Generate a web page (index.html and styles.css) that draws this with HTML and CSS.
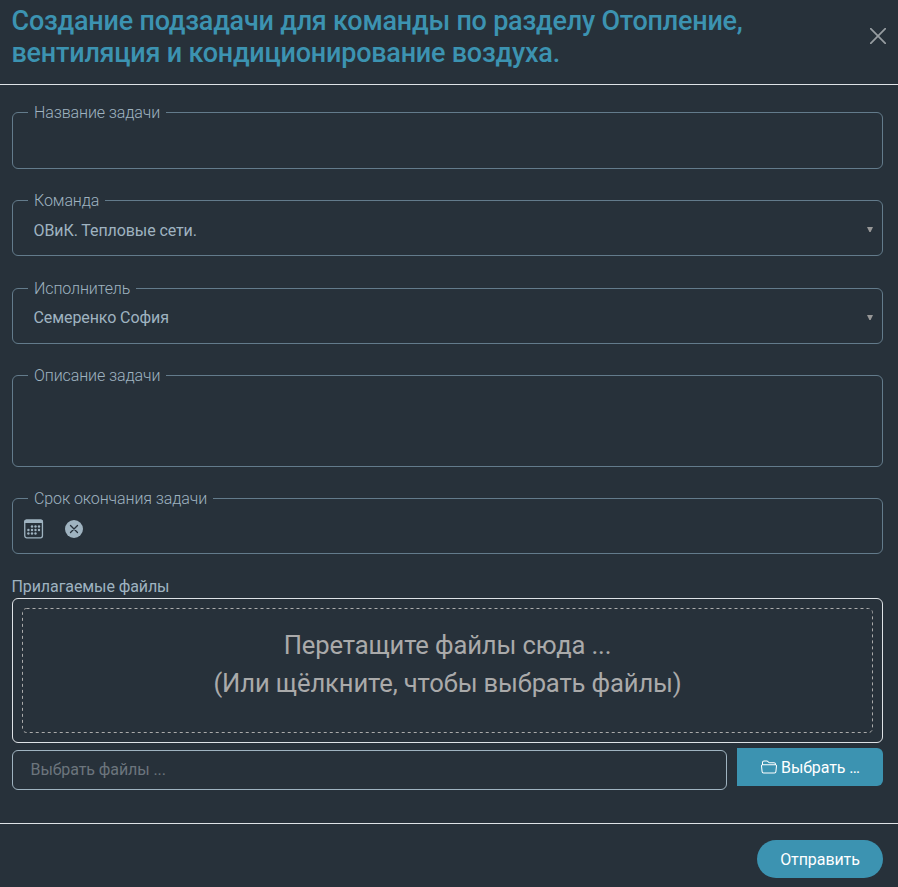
FILE: index.html
```html
<!DOCTYPE html>
<html lang="ru">
<head>
<meta charset="utf-8">
<title>Создание подзадачи</title>
<link rel="stylesheet" href="styles.css">
</head>
<body>
<div class="modal">
  <header class="modal-header">
    <h1 class="title"><span class="line-one">Создание подзадачи для команды по разделу Отопление,</span><br><span class="line-two">вентиляция и кондиционирование воздуха.</span></h1>
    <button class="close" aria-label="Закрыть">
      <svg width="16" height="16" viewBox="0 0 16 16"><path d="M.7.7l14.6 14.6M15.3.7L.7 15.3" stroke="#979da1" stroke-width="1.7" stroke-linecap="round"/></svg>
    </button>
  </header>
  <main class="modal-body">
    <fieldset class="field field-name"><legend>Название задачи</legend></fieldset>
    <fieldset class="field field-team"><legend>Команда</legend>
      <div class="select"><span class="value team">ОВиК. Тепловые сети.</span><svg class="arrow" width="6" height="5" viewBox="0 0 6 5"><path d="M0 0h6L3.6 5H2.4z" fill="#979797"/></svg></div>
    </fieldset>
    <fieldset class="field field-user"><legend>Исполнитель</legend>
      <div class="select"><span class="value user">Семеренко София</span><svg class="arrow" width="6" height="5" viewBox="0 0 6 5"><path d="M0 0h6L3.6 5H2.4z" fill="#979797"/></svg></div>
    </fieldset>
    <fieldset class="field field-text"><legend>Описание задачи</legend></fieldset>
    <fieldset class="field field-date"><legend>Срок окончания задачи</legend>
      <div class="date-tools">
        <svg width="20" height="20" viewBox="0 0 20 20"><rect x=".75" y="1.1" width="17.700" height="17.700" rx="2" fill="none" stroke="#9fb3c0" stroke-width="1.3"/><path d="M.2 4V2.500a2 2 0 0 1 2-2H17a2 2 0 0 1 2 2V4z" fill="#9fb3c0"/><g fill="#9fb3c0"><circle cx="8" cy="7.500" r="1.200"/><circle cx="11.500" cy="7.500" r="1.200"/><circle cx="15" cy="7.500" r="1.200"/><circle cx="4.400" cy="11" r="1.200"/><circle cx="8" cy="11" r="1.200"/><circle cx="11.500" cy="11" r="1.200"/><circle cx="15" cy="11" r="1.200"/><circle cx="4.400" cy="14.500" r="1.200"/><circle cx="8" cy="14.500" r="1.200"/><circle cx="11.500" cy="14.500" r="1.200"/></g></svg>
        <svg width="18" height="18" viewBox="0 0 18 18"><circle cx="9" cy="9" r="9" fill="#9fb3c0"/><path d="M5.500 5.500l7 7M12.500 5.500l-7 7" stroke="#27313a" stroke-width="1.300" stroke-linecap="round"/></svg>
      </div>
    </fieldset>
    <div class="files-label"><span>Прилагаемые файлы</span></div>
    <div class="preview">
      <div class="drop-zone"><svg class="dashes" width="851" height="125"><rect x=".5" y=".5" width="850" height="124" rx="4" fill="none" stroke="#aaa" stroke-dasharray="3 3"/></svg><div class="drop-one">Перетащите файлы сюда ...</div><div class="drop-two">(Или щёлкните, чтобы выбрать файлы)</div></div>
    </div>
    <div class="file-row">
      <div class="file-caption">Выбрать файлы ...</div>
      <button class="browse"><svg width="16" height="16" viewBox="0 0 16 16" fill="#fff"><path d="M1 3.500A2 2 0 0 1 3 1.500h2.700a2 2 0 0 1 1.400.600l.8.800a1 1 0 0 0 .7.300H13a2 2 0 0 1 2 1.900v.3a1.500 1.500 0 0 1 1 1.600l-.6 5.700a2 2 0 0 1-2 1.800H2.600a2 2 0 0 1-2-1.800L0 7a1.500 1.500 0 0 1 1-1.600zm1 1.700h12A1 1 0 0 0 13 4.200H8.600a2 2 0 0 1-1.400-.6l-.8-.8a1 1 0 0 0-.7-.3H3a1 1 0 0 0-1 1zM1.500 6.200a.5.5 0 0 0-.5.600l.6 5.800a1 1 0 0 0 1 .9h10.800a1 1 0 0 0 1-.9l.6-5.800a.5.500 0 0 0-.5-.6z"/></svg><span>Выбрать …</span></button>
    </div>
  </main>
  <footer class="modal-footer"><button class="submit">Отправить</button></footer>
</div>
</body>
</html>
```
FILE: styles.css
```css
* { box-sizing: border-box; }
body { margin: 0; background: #27313a; color: #9fb3c0; font: 400 16px/24px Roboto, sans-serif; letter-spacing: -.09px; }
button { border: 0; padding: 0; font: inherit; letter-spacing: inherit; color: #fff; }
svg { display: block; flex: none; }
.modal { display: flex; flex-direction: column; height: 887px; overflow: hidden; }
.modal-header { display: flex; justify-content: space-between; height: 85px; padding: 5px 12px 0 11.5px; border-bottom: 1px solid #dee2e6; }
.title { margin: 0; font-size: 27px; line-height: 32px; font-weight: 500; letter-spacing: -.23px; color: #3c93b1; white-space: nowrap; }
.close { align-self: flex-start; margin-top: 23px; background: none; }
.modal-body { flex: none; height: 738px; padding: 16px 15px 0 12px; }
.field { height: 67px; margin: 0; padding: 0 9px 0 15px; border: 1px solid #637b8b; border-radius: 6px; min-width: 0; }
.field legend { padding: 0 6px; line-height: 23px; font-weight: 300; letter-spacing: -.1px; white-space: nowrap; }
.field-name { height: 68px; }
.field-team, .field-user { margin-top: 20px; }
.field-user { margin-top: 21px; }
.field-text { height: 103px; margin-top: 20px; }
.field-date { margin-top: 20px; }
.select { display: flex; align-items: center; justify-content: space-between; height: 24px; padding-left: 5.5px; }
.field-team .select { margin-top: 7px; }
.field-user .select { margin-top: 6px; }
.arrow { margin-bottom: 3px; }
.field-user .arrow { margin-bottom: 1px; }
.date-tools { display: flex; align-items: center; gap: 21px; margin: 9px 0 0 -4px; }
.files-label { margin-top: 21px; height: 23px; margin-left: -.5px; }
.preview { height: 145px; padding: 9px; border: 1px solid #dee2e6; border-radius: 6px; }
.drop-zone { position: relative; height: 125px; padding-top: 18px; text-align: center; color: #aaa; font-size: 25.6px; letter-spacing: -.14px; line-height: 38px; }
.dashes { position: absolute; inset: 0; }
.file-row { display: flex; align-items: flex-start; gap: 10px; margin-top: 5px; }
.file-caption { width: 715px; height: 40px; margin-top: 2px; padding: 7px 17.5px; border: 1px solid #9fb3c0; border-radius: 6px; color: #6c757d; }
.browse { display: flex; align-items: center; justify-content: center; gap: 4px; width: 146px; height: 38px; padding-top: 1px; padding-left: 1px; background: #3c93b1; border-radius: 0 6px 6px 0; }
.browse svg { margin-top: -1px; }
.modal-footer { display: flex; justify-content: flex-end; height: 64px; padding: 16px 15px 0; border-top: 1px solid #dee2e6; }
.submit { width: 126px; height: 38px; padding-top: 2px; border-radius: 19px; background: #3c93b1; }
```
